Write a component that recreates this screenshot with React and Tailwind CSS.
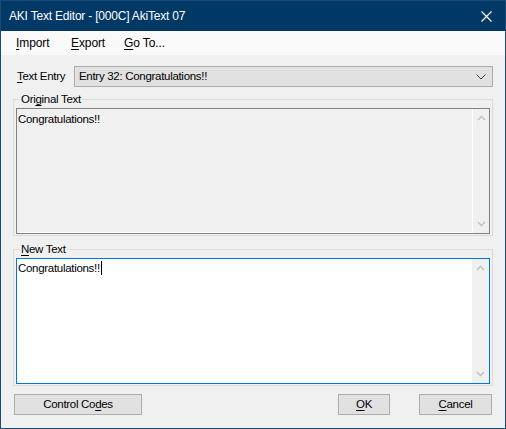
import React from "react";

const U = ({ children }) => <span className="underline underline-offset-[2px] decoration-[1px]">{children}</span>;

function ChevronUp() {
  return (
    <svg width="9" height="6" viewBox="0 0 9 6" className="block">
      <path d="M1 5 L4.5 1.5 L8 5" fill="none" stroke="#c4c4c4" strokeWidth="1.6" />
    </svg>
  );
}
function ChevronDown() {
  return (
    <svg width="9" height="6" viewBox="0 0 9 6" className="block">
      <path d="M1 1 L4.5 4.5 L8 1" fill="none" stroke="#c4c4c4" strokeWidth="1.6" />
    </svg>
  );
}

function Scrollbar({ white }) {
  return (
    <div className={`w-[17px] h-full flex flex-col items-center justify-between py-[6px] bg-[#f0f0f0] ${white ? "" : "border-l border-white"}`}>
      <ChevronUp />
      <ChevronDown />
    </div>
  );
}

function Group({ label, children }) {
  return (
    <div className="relative h-[137px] border border-[#dcdcdc] pt-[8px] px-[2px] pb-[1px] flex">
      <div className="absolute left-[6px] top-[-8px] px-[1px] bg-[#f0f0f0] leading-[14px] text-black">{label}</div>
      {children}
    </div>
  );
}

export default function App() {
  return (
    <div
      className="w-[506px] h-[429px] flex flex-col border border-[#1c4a78] bg-[#f0f0f0] text-[11.5px] tracking-[-0.3px] text-black overflow-hidden"
      style={{ fontFamily: '"Liberation Sans", Arial, sans-serif' }}
    >
      {/* Title bar */}
      <div className="h-[30px] shrink-0 bg-[#003966] flex items-center justify-between pl-[8px] pr-[13px]">
        <span className="text-white text-[12px] tracking-[-0.2px]">AKI Text Editor - [000C] AkiText 07</span>
        <svg width="11" height="11" viewBox="0 0 11 11">
          <path d="M0.5 0.5 L10.5 10.5 M10.5 0.5 L0.5 10.5" stroke="#ffffff" strokeWidth="1.2" />
        </svg>
      </div>
      {/* Menu */}
      <div className="h-[24px] shrink-0 bg-[#f9f9f9] flex items-center pl-[15px] text-[12px] tracking-[-0.1px]">
        <span className="w-[55px]"><U>I</U>mport</span>
        <span className="w-[53px]"><U>E</U>xport</span>
        <span><U>G</U>o To...</span>
      </div>
      {/* Body */}
      <div className="flex-1 flex flex-col px-[12px] pt-[11px]">
        <div className="flex items-center h-[21px]">
          <span className="w-[61px] pl-[4px]"><U>T</U>ext Entry</span>
          <div className="flex-1 h-[21px] border border-[#adadad] bg-[#e1e1e1] flex items-center justify-between pl-[4px] pr-[6px]">
            <span>Entry 32: Congratulations!!</span>
            <svg width="10" height="6" viewBox="0 0 10 6">
              <path d="M0.5 0.5 L5 5 L9.5 0.5" fill="none" stroke="#404040" strokeWidth="1" />
            </svg>
          </div>
        </div>
        <div className="mt-[12px]">
          <Group label={<span>Ori<U>g</U>inal Text</span>}>
            <div className="flex-1 flex border border-[#828282] bg-[#f0f0f0] shadow-[inset_-1px_-1px_0_#ffffff]">
              <div className="flex-1 pl-[1px] pt-[3px] leading-[15px]">Congratulations!!</div>
              <Scrollbar />
            </div>
          </Group>
        </div>
        <div className="mt-[13px]">
          <Group label={<span><U>N</U>ew Text</span>}>
            <div className="flex-1 flex border border-[#0078d7] bg-white">
              <div className="flex-1 pl-[1px] pt-[2px] leading-[15px] flex items-start">
                <span>Congratulations!!</span>
                <span className="inline-block w-[1px] h-[14px] bg-black ml-[1px]" />
              </div>
              <Scrollbar white />
            </div>
          </Group>
        </div>
        <div className="mt-[8px] flex items-center">
          <button className="ml-[1px] w-[128px] h-[21px] border border-[#adadad] bg-[#e1e1e1] text-center">
            Control Co<U>d</U>es
          </button>
          <div className="flex-1" />
          <button className="w-[52px] h-[21px] border border-[#adadad] bg-[#e1e1e1]"><U>O</U>K</button>
          <button className="ml-[29px] mr-[1px] w-[73px] h-[21px] border border-[#adadad] bg-[#e1e1e1]"><U>C</U>ancel</button>
        </div>
      </div>
    </div>
  );
}
